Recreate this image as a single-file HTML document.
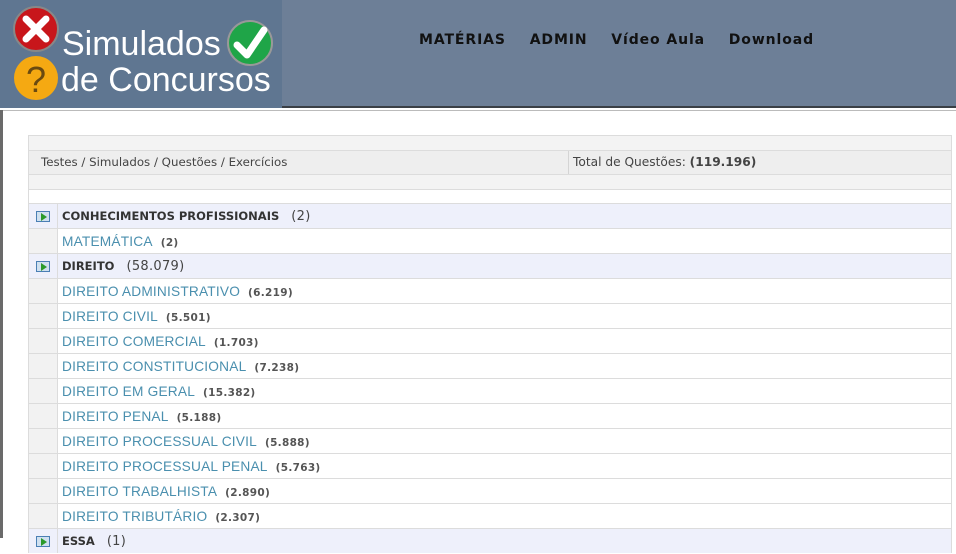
<!DOCTYPE html>
<html><head><meta charset="utf-8"><style>
*{margin:0;padding:0;box-sizing:border-box}
body{width:956px;height:538px;overflow:hidden;background:#fff;font-family:"DejaVu Sans","Liberation Sans",sans-serif;position:relative}
#hdr{position:absolute;left:0;top:0;width:956px;height:108px;background:#6d7f97;border-bottom:2px solid #3a3f45}
#logo{position:absolute;left:0;top:0;width:282px;height:108px;background:#5f7691}
.lt{position:absolute;color:#fff;font-family:"Liberation Sans",sans-serif;font-size:34px;line-height:34px}
#nav{position:absolute;left:419px;top:32px;font-size:14px;font-weight:bold;color:#111;letter-spacing:0.9px;word-spacing:0}
#nav span{margin-right:18px}
#lb{position:absolute;left:0;top:110px;width:3px;height:428px;background:#6a6a6a}
#lt2{position:absolute;left:3px;top:110px;width:953px;height:1px;background:#bbb}
#box{position:absolute;left:28px;top:135px;width:924px;border:1px solid #dcdcdc;border-bottom:none}
.strip{height:14px;background:#f3f3f3}
.hrow{height:25px;background:#eeeeee;border-top:1px solid #dcdcdc;border-bottom:1px solid #dcdcdc;display:flex;font-size:11.8px;color:#444;line-height:23px}
.hrow div:first-child{width:540px;border-right:1px solid #d4d4d4;padding-left:12px}
.hrow div:last-child{padding-left:4px;font-size:12.2px}
.white{height:14px;background:#fff;border-top:1px solid #dcdcdc}
.row{height:25px;display:flex;border-top:1px solid #dcdcdc;font-size:13.7px;line-height:25px}
.ic{width:29px;border-right:1px solid #dcdcdc;background:#f2f2f2;position:relative}
.cat .ic{background:#eef0fb}
.cat{background:#eef0fb}
.cat .t{font-weight:bold;color:#333;font-size:11.5px;font-family:"DejaVu Sans",sans-serif;letter-spacing:0}
.cat .n{color:#444;font-weight:normal;font-size:13px}
.t{padding-left:4px;color:#4a8fae;font-family:"Liberation Sans",sans-serif;letter-spacing:0.2px}
.n{color:#555;font-weight:bold;font-size:10.5px;margin-left:8px;font-family:"DejaVu Sans",sans-serif;letter-spacing:0.3px}
.ico{position:absolute;left:7px;top:7px;width:14px;height:11px;border:1px solid #4a7fb4;background:#cfe0f0}
.ico:after{content:"";position:absolute;left:4px;top:1px;border-left:6px solid #2a9a2a;border-top:4px solid transparent;border-bottom:4px solid transparent}
</style></head><body>
<div id="hdr">
<div id="logo">
<svg style="position:absolute;left:13px;top:6px" width="48" height="48"><circle cx="23" cy="23" r="22" fill="#c8161b" stroke="#888" stroke-width="2"/><path d="M13 13L33 33M33 13L13 33" stroke="#fff" stroke-width="7" stroke-linecap="round"/></svg>
<svg style="position:absolute;left:13px;top:55px" width="48" height="48"><circle cx="23" cy="23" r="22" fill="#f5a912"/><text x="23" y="37" text-anchor="middle" font-size="36" fill="#6a4a10" font-family="Liberation Sans">?</text></svg>
<svg style="position:absolute;left:226px;top:19px" width="48" height="48"><circle cx="24" cy="24" r="22" fill="#1fa548" stroke="#999" stroke-width="2"/><path d="M11 26L21 36L38 11" fill="none" stroke="#fff" stroke-width="7" stroke-linecap="round" stroke-linejoin="round"/></svg>
<div class="lt" style="left:62px;top:27px">Simulados</div>
<div class="lt" style="left:61px;top:63px">de Concursos</div>
</div>
<div id="nav"><span>MATÉRIAS</span> <span>ADMIN</span> <span>Vídeo Aula</span> <span>Download</span></div>
</div>
<div id="lb"></div><div id="lt2"></div>
<div id="box">
<div class="strip"></div>
<div class="hrow"><div>Testes / Simulados / Questões / Exercícios</div><div>Total de Questões: <b>(119.196)</b></div></div>
<div class="strip"></div>
<div class="white"></div>
<div class="row cat"><div class="ic"><div class="ico"></div></div><div class="t">CONHECIMENTOS PROFISSIONAIS <span class="n">(2)</span></div></div>
<div class="row"><div class="ic"></div><div class="t">MATEMÁTICA<span class="n">(2)</span></div></div>
<div class="row cat"><div class="ic"><div class="ico"></div></div><div class="t">DIREITO <span class="n">(58.079)</span></div></div>
<div class="row"><div class="ic"></div><div class="t">DIREITO ADMINISTRATIVO<span class="n">(6.219)</span></div></div>
<div class="row"><div class="ic"></div><div class="t">DIREITO CIVIL<span class="n">(5.501)</span></div></div>
<div class="row"><div class="ic"></div><div class="t">DIREITO COMERCIAL<span class="n">(1.703)</span></div></div>
<div class="row"><div class="ic"></div><div class="t">DIREITO CONSTITUCIONAL<span class="n">(7.238)</span></div></div>
<div class="row"><div class="ic"></div><div class="t">DIREITO EM GERAL<span class="n">(15.382)</span></div></div>
<div class="row"><div class="ic"></div><div class="t">DIREITO PENAL<span class="n">(5.188)</span></div></div>
<div class="row"><div class="ic"></div><div class="t">DIREITO PROCESSUAL CIVIL<span class="n">(5.888)</span></div></div>
<div class="row"><div class="ic"></div><div class="t">DIREITO PROCESSUAL PENAL<span class="n">(5.763)</span></div></div>
<div class="row"><div class="ic"></div><div class="t">DIREITO TRABALHISTA<span class="n">(2.890)</span></div></div>
<div class="row"><div class="ic"></div><div class="t">DIREITO TRIBUTÁRIO<span class="n">(2.307)</span></div></div>
<div class="row cat"><div class="ic"><div class="ico"></div></div><div class="t">ESSA <span class="n">(1)</span></div></div>
</div>
</body></html>
